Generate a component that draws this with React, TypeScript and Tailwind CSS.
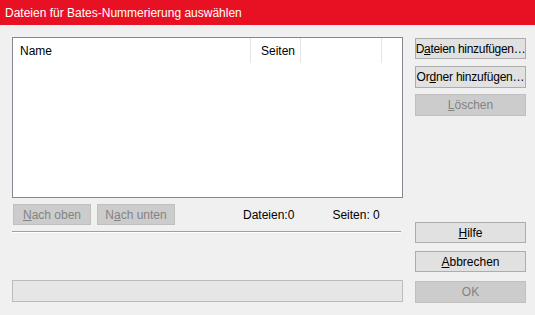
import React from "react";

const font = { fontFamily: '"Segoe UI", "Liberation Sans", Arial, sans-serif' };

function Btn({
  children,
  disabled,
  className = "",
}: {
  children: React.ReactNode;
  disabled?: boolean;
  className?: string;
}) {
  return (
    <div
      className={
        "flex items-center justify-center border text-[12px] leading-none whitespace-nowrap " +
        (disabled
          ? "border-[#bfbfbf] bg-[#cccccc] text-[#838383] "
          : "border-[#adadad] bg-[#e1e1e1] text-black ") +
        className
      }
    >
      {children}
    </div>
  );
}

export default function App() {
  return (
    <div className="w-[535px] h-[315px] bg-[#f0f0f0] flex flex-col overflow-hidden" style={font}>
      <div className="h-[25px] bg-[#e81123] text-white text-[12px] flex items-center pl-[5px] shrink-0">
        Dateien für Bates-Nummerierung auswählen
      </div>
      <div className="flex pl-[12px] pt-[12px]">
        {/* left column */}
        <div className="w-[391px] flex flex-col">
          <div className="h-[161px] border border-[#828790] bg-white">
            <div className="h-[25px] flex text-[12px] text-black">
              <div className="w-[238px] border-r border-[#e5e5e5] flex items-center pl-[7px]">Name</div>
              <div className="w-[50px] border-r border-[#e5e5e5] flex items-center pl-[10px]">Seiten</div>
              <div className="w-[81px] border-r border-[#e5e5e5]"></div>
            </div>
          </div>
          <div className="flex items-center mt-[6px] h-[21px]">
            <Btn disabled className="ml-[1px] w-[78px] h-[21px]">
              <span>
                <span className="underline">N</span>ach oben
              </span>
            </Btn>
            <Btn disabled className="ml-[6px] w-[78px] h-[21px]">
              <span>
                N<span className="underline">a</span>ch unten
              </span>
            </Btn>
            <div className="ml-[68px] text-[12px] text-black">Dateien:0</div>
            <div className="ml-[38px] text-[12px] text-black">Seiten: 0</div>
          </div>
          <div className="mt-[6px] w-[389px] h-[2px] border-t border-[#a0a0a0] border-b border-b-white"></div>
          <div className="mt-[47px] h-[22px] border border-[#bcbcbc] bg-[#e6e6e6]"></div>
        </div>
        {/* right column */}
        <div className="ml-[12px] w-[111px] flex flex-col pt-[1px]">
          <Btn className="h-[21px] tracking-[-0.3px]">
            <span>
              D<span className="underline">a</span>teien hinzufügen…
            </span>
          </Btn>
          <Btn className="h-[22px] mt-[7px] tracking-[-0.2px]">
            <span>
              Or<span className="underline">d</span>ner hinzufügen…
            </span>
          </Btn>
          <Btn disabled className="h-[22px] mt-[6px]">
            <span>
              <span className="underline">L</span>öschen
            </span>
          </Btn>
          <Btn className="h-[21px] mt-[106px]">
            <span>
              <span className="underline">H</span>ilfe
            </span>
          </Btn>
          <Btn className="h-[21px] mt-[8px]">
            <span>
              <span className="underline">A</span>bbrechen
            </span>
          </Btn>
          <Btn disabled className="h-[22px] mt-[9px]">
            OK
          </Btn>
        </div>
      </div>
    </div>
  );
}
